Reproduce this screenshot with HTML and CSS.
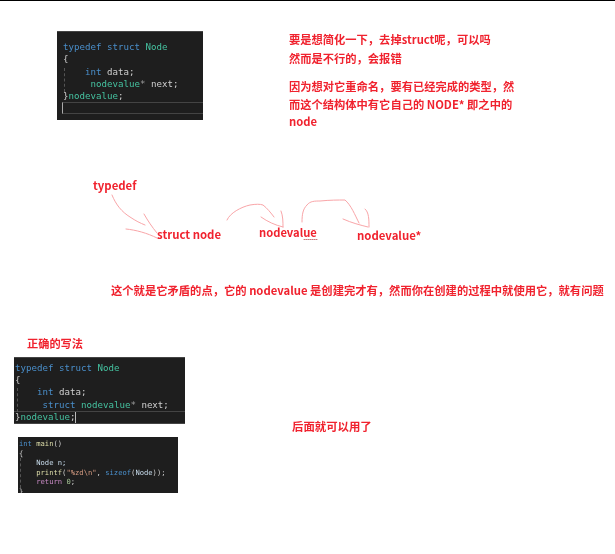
FILE: index.html
```html
<!DOCTYPE html>
<html lang="zh-CN">
<head>
<meta charset="utf-8">
<title>typedef struct</title>
<link rel="stylesheet" href="styles.css">
</head>
<body>
<main class="canvas">
  <pre class="code code-a"><span class="kw">typedef struct</span> <span class="ty">Node</span>
{
    <span class="kw">int</span> data;
     <span class="ty">nodevalue</span><span class="op">*</span> next;
}<span class="ty">nodevalue</span>;
<span class="cur-line"></span></pre>

  <div class="note note-a">
    <p>要是想简化一下&#xFF0C;去掉struct呢&#xFF0C;可以吗</p>
    <p>然而是不行的&#xFF0C;会报错</p>
  </div>
  <div class="note note-b">
    <p>因为想对它重命名&#xFF0C;要有已经完成的类型&#xFF0C;然</p>
    <p>而这个结构体中有它自己的 NODE* 即之中的</p>
    <p>node</p>
  </div>

  <svg class="arrows" width="615" height="554" viewBox="0 0 615 554" fill="none" aria-hidden="true">
    <g stroke="#f9a5a8" stroke-width="1" stroke-linecap="round" stroke-linejoin="round">
      <path d="M112 195C116 205 122 212 130 217C136 221 140 223 145 225"/>
      <path d="M144 214C148 221 152 227 157 233"/>
      <path d="M126 229C136 230 147 233 157 238"/>
      <path d="M227 220C230 213 241 207 250 205C256 204 260 204 263 205C267 208 271 213 274 217"/>
      <path d="M261 217C268 222 275 225 283 227"/>
      <path d="M281 211C283 216 283 222 283 227"/>
      <path d="M302 222C302 214 303 209 307 205C310 201 315 201 320 201C330 200 338 200 345 200C351 205 355 215 359 223"/>
      <path d="M343 219C352 223 360 225 368 227"/>
      <path d="M365 209C369 212 369 220 369 227"/>
      <path d="M304 239.500H318" stroke="#c9787c" stroke-dasharray="1 1"/>
    </g>
  </svg>

  <span class="label label-typedef">typedef</span>
  <span class="label label-struct">struct node</span>
  <span class="label label-value">nodevalue</span>
  <span class="label label-ptr">nodevalue*</span>

  <p class="note note-c">这个就是它矛盾的点&#xFF0C;它的 nodevalue 是创建完才有&#xFF0C;然而你在创建的过程中就使用它&#xFF0C;就有问题</p>
  <p class="note note-d">正确的写法</p>

  <pre class="code code-b"><span class="kw">typedef struct</span> <span class="ty">Node</span>
{
    <span class="kw">int</span> data;
     <span class="kw">struct</span> <span class="ty">nodevalue</span><span class="op">*</span> next;
<span class="cur-row">}<span class="ty">nodevalue</span>;<span class="caret"></span></span></pre>

  <p class="note note-e">后面就可以用了</p>

  <pre class="code code-c"><span class="kw">int</span> <span class="fn">main</span>()
{
    <span class="lt">Node n;</span>
    <span class="fn">printf</span>(<span class="st">"%zd\n"</span>, <span class="kw2">sizeof</span>(<span class="lt">Node</span>));
    <span class="pk">return</span> <span class="nu">0</span>;
}</pre>
</main>
</body>
</html>
```
FILE: styles.css
```css
* { box-sizing: border-box; }
html, body { margin: 0; padding: 0; background: #fff; }
.canvas {
  position: relative;
  width: 615px;
  height: 554px;
  overflow: hidden;
  border-top: 1px solid #000;
  font-family: "Noto Sans CJK SC", "Noto Sans", sans-serif;
}
p { margin: 0; }

/* code screenshots */
.code {
  position: absolute;
  margin: 0;
  background: #1e1e1e;
  color: #d0d0d0;
  font-family: "DejaVu Sans Mono", monospace;
  white-space: pre;
  overflow: hidden;
  filter: blur(0.3px);
}
.code::before {
  content: "";
  position: absolute;
  width: 0;
  border-left: 1px dashed #555;
}
.code-a {
  left: 57px; top: 30px; width: 146px; height: 89px;
  padding: 9px 0 0 6px;
  font-size: 9.14px;
  line-height: 12.3px;
  border-top: 1px solid #444;
}
.code-a::before { left: 7px; top: 36px; height: 24px; }
.code-b {
  left: 14px; top: 356px; width: 171px; height: 67px;
  padding: 4px 0 0 1px;
  font-size: 9.14px;
  line-height: 12.2px;
  border-top: 1px solid #444;
}
.code-b::before { left: 3px; top: 30px; height: 24px; }
.code-c {
  left: 18px; top: 436px; width: 160px; height: 56px;
  padding: 2px 0 0 1px;
  font-size: 7.17px;
  line-height: 9.5px;
  filter: blur(0.45px);
}
.code-c::before { left: 2px; top: 21px; height: 30px; }
.kw { color: #4a8fcb; }
.ty { color: #45c2a0; }
.op { color: #9a9a9a; }
.fn { color: #dcdca8; }
.st { color: #d39a80; }
.kw2 { color: #4a8fcb; }
.pk { color: #c88ac4; }
.nu { color: #a8c898; }
.lt { color: #c8dcec; }
.cur-line {
  display: block;
  height: 12px;
  margin-left: -1px;
  border: 1px solid #444;
  border-right: 0;
  border-left: 1px solid #aaa;
}
.cur-row {
  display: block;
  margin-left: -1px;
  padding-left: 1px;
  border-top: 1px solid #444;
  border-bottom: 1px solid #444;
  height: 13px;
  line-height: 11px;
}
.caret {
  display: inline-block;
  width: 1px;
  height: 11px;
  background: #bbb;
  vertical-align: top;
}

/* red annotations */
.note, .label {
  position: absolute;
  color: #f0222e;
  font-weight: 700;
  white-space: nowrap;
  filter: blur(0.25px);
}
.note { font-size: 11.27px; }
.note-a { left: 289px; top: 29px; line-height: 19px; }
.note-b { left: 289px; top: 77px; line-height: 17.6px; }
.note-c { left: 111px; top: 280px; line-height: 18px; font-size: 11.3px; }
.note-d { left: 27px; top: 334px; line-height: 16px; font-size: 11.2px; }
.note-e { left: 292px; top: 417px; line-height: 17px; font-size: 11.4px; }
.label { font-size: 11.4px; line-height: 16px; }
.label-typedef { left: 93px; top: 176px; }
.label-struct { left: 157px; top: 225px; }
.label-value { left: 259px; top: 223px; font-size: 11.2px; }
.label-ptr { left: 357px; top: 226px; }
.arrows { position: absolute; left: 0; top: -1px; pointer-events: none; }
```
